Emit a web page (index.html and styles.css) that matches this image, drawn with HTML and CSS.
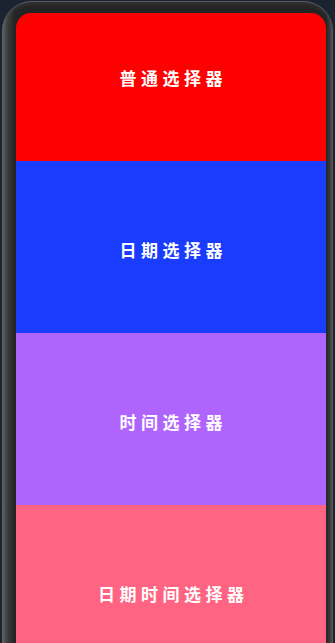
FILE: index.html
```html
<!DOCTYPE html>
<html>
<head>
<meta charset="utf-8">
<link rel="stylesheet" href="styles.css">
</head>
<body>
<div class="device">
  <div class="screen">
    <div class="list">
      <div class="item red"><span>普通选择器</span></div>
      <div class="item blue"><span>日期选择器</span></div>
      <div class="item purple"><span>时间选择器</span></div>
      <div class="item pink"><span>日期时间选择器</span></div>
    </div>
  </div>
</div>
</body>
</html>
```
FILE: styles.css
```css
html, body {
  margin: 0;
  padding: 0;
  height: 100%;
  background: #1b2230;
  overflow: hidden;
}
.device {
  margin: 1px 2px 0 2px;
  width: 331px;
  height: 642px;
  box-sizing: border-box;
  padding: 12px 7px 0 14px;
  border-radius: 30px 30px 0 0;
  background: linear-gradient(to right, #5e6062 0px, #3a3b3c 6px, #242424 13px, #242424 calc(100% - 7px), #3a3b3c calc(100% - 3px), #58595b 100%);
  box-shadow: inset 0 1px 0 #56585a, inset 0 3px 4px rgba(255,255,255,0.08);
}
.screen {
  width: 310px;
  height: 630px;
  border-radius: 15px 15px 0 0;
  overflow: hidden;
}
.list {
  display: flex;
  flex-direction: column;
  margin-top: -24px;
}
.item {
  flex: none;
  height: 172px;
  display: flex;
  align-items: center;
  justify-content: center;
  padding-top: 4px;
  box-sizing: border-box;
  color: #ffffff;
  font-family: "Noto Sans CJK SC", "Noto Sans", sans-serif;
  font-weight: 700;
  font-size: 17px;
  letter-spacing: 4.5px;
}
.item span {
  margin-right: -4.5px;
}
.red { background: #ff0000; }
.blue { background: #1a3cff; }
.purple { background: #b064fe; }
.pink { background: #ff6482; }
```
